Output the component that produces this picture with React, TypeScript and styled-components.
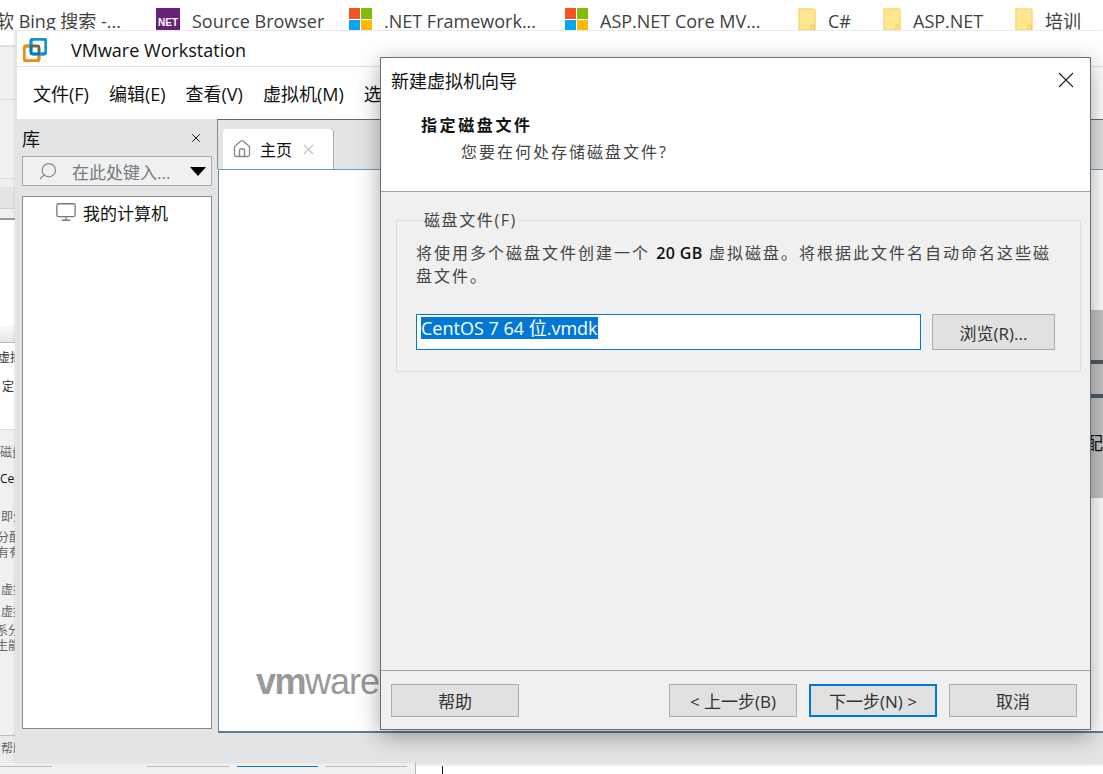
import React from "react";
import styled, { createGlobalStyle } from "styled-components";
import { House, Monitor, Search, X } from "lucide-react";

const UI_FONT = `"Open Sans", "Noto Sans", "Noto Sans CJK SC", sans-serif`;

const GlobalStyle = createGlobalStyle`
	html, body {
		margin: 0;
		padding: 0;
		background: #fff;
	}
	* {
		box-sizing: border-box;
	}
`;

const MsLogo = () => (
	<svg width="23" height="23" viewBox="0 0 23 23">
		<rect width="11" height="11" fill="#f35325" />
		<rect x="12" width="11" height="11" fill="#81bc06" />
		<rect y="12" width="11" height="11" fill="#05a6f0" />
		<rect x="12" y="12" width="11" height="11" fill="#ffba08" />
	</svg>
);

const FolderIcon = () => (
	<svg width="18" height="22" viewBox="0 0 18 22">
		<path d="M1 1h15l1 1v20H1z" fill="#ffe68f" stroke="#f8d775" strokeWidth="1.5" />
		<path d="M13 22v-5h3v5" fill="none" stroke="#f3c94f" strokeWidth="1" />
	</svg>
);

const VmLogo = () => (
	<svg width="24" height="24" viewBox="0 0 24 24">
		<rect x="1" y="8" width="15" height="15" rx="2.5" fill="none" stroke="#f08a12" strokeWidth="3.4" />
		<rect x="8" y="1" width="15" height="15" rx="2.5" fill="none" stroke="#0f95d3" strokeWidth="3.4" />
		<rect x="8" y="8" width="8" height="8" fill="none" stroke="#0f6d9c" strokeWidth="1.6" />
	</svg>
);

const ThinClose = () => (
	<svg width="16" height="16" viewBox="0 0 16 16">
		<path d="M1 1l14 14M15 1L1 15" stroke="#222" strokeWidth="1.1" fill="none" />
	</svg>
);

const menus = ["文件(F)", "编辑(E)", "查看(V)", "虚拟机(M)", "选项卡(T)"];

const stripRows = [
	{ top: 8, height: 14, text: "虚拟", light: false },
	{ top: 15, height: 14, text: "定", light: false, indent: 2 },
];

const sideRows = [
	{ top: 16, text: "磁盘", indent: 0 },
	{ top: 12, text: "Cen", indent: 0, dark: true },
	{ top: 24, text: "即分", indent: 1 },
	{ top: 7, text: "分配", indent: -3 },
	{ top: 1, text: "有有", indent: -3 },
	{ top: 23, text: "虚拟", indent: 1 },
	{ top: 8, text: "虚拟", indent: 1 },
	{ top: 5, text: "系分", indent: -4 },
	{ top: 1, text: "生能", indent: -4 },
];

export default function App() {
	const bookmarks = [
		{ key: "bing", width: 156, label: "软 Bing 搜索 -..." },
		{ key: "net", width: 193, label: "Source Browser", icon: <NetBadge>NET</NetBadge> },
		{ key: "fw", width: 216, label: ".NET Framework...", icon: <MsLogo /> },
		{ key: "core", width: 233, label: "ASP.NET Core MV...", icon: <MsLogo /> },
		{ key: "cs", width: 85, label: "C#", icon: <FolderIcon /> },
		{ key: "asp", width: 132, label: "ASP.NET", icon: <FolderIcon /> },
		{ key: "train", width: 88, label: "培训", icon: <FolderIcon /> },
	];

	return (
		<Page>
			<GlobalStyle />
			<BookmarkBar>
				{bookmarks.map((b) => (
					<Bookmark key={b.key} $width={b.width}>
						{b.icon && <BookmarkIcon>{b.icon}</BookmarkIcon>}
						<BookmarkLabel $flush={!b.icon}>{b.label}</BookmarkLabel>
					</Bookmark>
				))}
			</BookmarkBar>

			<BackWindow>
				<BackTop />
				<BackRule $mt={52} />
				<BackRule $mt={78} />
				<BackButton />
				<BackWhite>
					<BackClipped />
				</BackWhite>
				<BackTabHead />
				<BackCard>
					{stripRows.map((r) => (
						<BackText key={r.text} $mt={r.top} $indent={r.indent ?? -2}>
							{r.text}
						</BackText>
					))}
				</BackCard>
				<BackSide>
					{sideRows.map((r, i) => (
						<BackText key={i} $mt={r.top} $indent={r.indent} $dark={r.dark} $grey={!r.dark}>
							{r.text}
						</BackText>
					))}
				</BackSide>
				<BackFooter>
					<BackText $mt={6} $indent={1} $grey>
						帮助
					</BackText>
				</BackFooter>
			</BackWindow>

			<BottomStrip>
				<StripTabs>
					<StripTab $width={52} />
					<StripTab $width={82} $gap={95} />
					<StripTab $width={81} $gap={8} $active />
					<StripTab $width={81} $gap={8} />
				</StripTabs>
				<StripEdge />
				<StripCursor />
			</BottomStrip>

			<MainWindow>
				<TitleBar>
					<VmLogo />
					<AppTitle>VMware Workstation</AppTitle>
				</TitleBar>
				<MenuBar>
					{menus.map((m) => (
						<MenuItem key={m}>{m}</MenuItem>
					))}
				</MenuBar>
				<Body>
					<Library>
						<LibraryHead>
							<span>库</span>
							<X size={14} color="#111" strokeWidth={1.6} />
						</LibraryHead>
						<SearchBox>
							<SearchIcon size={20} color="#8a8a8a" strokeWidth={1.5} />
							<SearchHint>在此处键入...</SearchHint>
							<Caret />
						</SearchBox>
						<Tree>
							<TreeRow>
								<Monitor size={22} color="#777" strokeWidth={1.4} />
								<span>我的计算机</span>
							</TreeRow>
						</Tree>
					</Library>
					<Workspace>
						<TabStrip>
							<Tab>
								<House size={20} color="#888" strokeWidth={1.6} />
								<TabLabel>主页</TabLabel>
								<X size={17} color="#c4c4c4" strokeWidth={1.8} />
							</Tab>
						</TabStrip>
						<Panel>
							<BrandMark>
								<b>vm</b>ware
							</BrandMark>
							<HomeTile>
								<TileBar />
								<TileBar />
								<TileText>配</TileText>
							</HomeTile>
						</Panel>
					</Workspace>
				</Body>
			</MainWindow>

			<Dialog>
				<DialogHead>
					<DialogTitleRow>
						<DialogTitle>新建虚拟机向导</DialogTitle>
						<ThinClose />
					</DialogTitleRow>
					<WizardTitle>指定磁盘文件</WizardTitle>
					<WizardSub>您要在何处存储磁盘文件?</WizardSub>
				</DialogHead>
				<DialogBody>
					<FileGroup>
						<GroupLegend>磁盘文件(F)</GroupLegend>
						<GroupText>
							将使用多个磁盘文件创建一个 <b>20 GB</b> 虚拟磁盘。将根据此文件名自动命名这些磁盘文件。
						</GroupText>
						<FileRow>
							<FileInput>
								<Selected>CentOS 7 64 位.vmdk</Selected>
							</FileInput>
							<Button $width={123} $height={36}>
								浏览(R)...
							</Button>
						</FileRow>
					</FileGroup>
				</DialogBody>
				<DialogFoot>
					<Button>帮助</Button>
					<FootSpacer />
					<Button>&lt; 上一步(B)</Button>
					<Button $primary>下一步(N) &gt;</Button>
					<Button>取消</Button>
				</DialogFoot>
			</Dialog>
		</Page>
	);
}

const Page = styled.div`
	position: relative;
	width: 1103px;
	height: 774px;
	overflow: hidden;
	background: #fff;
	font-family: ${UI_FONT};
	color: #111;
`;

const BookmarkBar = styled.div`
	display: flex;
	height: 31px;
	overflow: hidden;
	border-bottom: 1px solid #f0f0f0;
`;

const Bookmark = styled.div<{ $width: number }>`
	display: flex;
	flex: none;
	width: ${(p) => p.$width}px;
	height: 30px;
	gap: 12px;
	padding-top: 8px;
	overflow: hidden;
	white-space: nowrap;
`;

const BookmarkIcon = styled.div`
	flex: none;
	height: 22px;
`;

const BookmarkLabel = styled.span<{ $flush: boolean }>`
	font-size: 18px;
	line-height: 26px;
	color: #3f3f3f;
	margin-left: ${(p) => (p.$flush ? "-4px" : "0")};
`;

const NetBadge = styled.div`
	display: flex;
	align-items: flex-end;
	justify-content: center;
	width: 24px;
	height: 22px;
	padding-bottom: 1px;
	background: #68217a;
	color: #fff;
	font: bold 10px/12px "Liberation Sans", sans-serif;
`;

const BackWindow = styled.div`
	position: absolute;
	left: 0;
	top: 31px;
	width: 15px;
	height: 733px;
	display: flex;
	flex-direction: column;
	background: #f0f0f0;
`;

const BackTop = styled.div`
	height: 16px;
	background: #fff;
	border-bottom: 2px solid #dedede;
`;

const BackRule = styled.div<{ $mt: number }>`
	height: 1px;
	margin-top: ${(p) => p.$mt}px;
	background: #dcdcdc;
`;

const BackButton = styled.div`
	height: 22px;
	margin-top: 8px;
	background: #e4e4e4;
	border-bottom: 1px solid #cfcfcf;
`;

const BackWhite = styled.div`
	flex: none;
	height: 107px;
	margin-top: 9px;
	background: #fff;
	border-top: 2px solid #9a9a9a;
	overflow: hidden;
`;

const BackClipped = styled.div`
	height: 2px;
	margin-top: 105px;
	background: #555;
`;

const BackTabHead = styled.div`
	height: 18px;
	background: linear-gradient(#fafafa, #e6e6e6);
	border-bottom: 1px solid #b5b5b5;
`;

const BackCard = styled.div`
	height: 87px;
	background: #fff;
	border-bottom: 1px solid #dcdcdc;
	overflow: hidden;
`;

const BackSide = styled.div`
	height: 305px;
	overflow: hidden;
`;

const BackFooter = styled.div`
	flex: 1;
	border-top: 1px solid #bdbdbd;
	overflow: hidden;
	background: #ebebeb;
`;

const BackText = styled.div<{ $mt: number; $indent: number; $dark?: boolean; $grey?: boolean }>`
	height: 14px;
	margin-top: ${(p) => p.$mt}px;
	margin-left: ${(p) => p.$indent}px;
	font-size: 12px;
	line-height: 14px;
	white-space: nowrap;
	color: ${(p) => (p.$dark ? "#111" : p.$grey ? "#666" : "#333")};
`;

const BottomStrip = styled.div`
	position: absolute;
	left: 0;
	right: 0;
	bottom: 0;
	height: 11px;
	display: flex;
	background: linear-gradient(#eeeeee 3px, #fff 3px);
`;

const StripTabs = styled.div`
	display: flex;
	align-items: flex-start;
	width: 416px;
	height: 11px;
	padding-top: 3px;
	background: #f0f0f0;
	border-right: 1px solid #b5b5b5;
`;

const StripTab = styled.div<{ $width: number; $gap?: number; $active?: boolean }>`
	flex: none;
	width: ${(p) => p.$width}px;
	height: 1px;
	margin-left: ${(p) => p.$gap ?? 0}px;
	background: ${(p) => (p.$active ? "#0078d7" : "#b8b8b8")};
`;

const StripEdge = styled.div`
	width: 26px;
`;

const StripCursor = styled.div`
	width: 1px;
	height: 8px;
	margin-top: 3px;
	background: #111;
`;

const MainWindow = styled.div`
	position: absolute;
	left: 15px;
	right: 0;
	top: 31px;
	height: 732px;
	display: flex;
	flex-direction: column;
	padding-left: 2px;
	background: #e3e4e6;
	box-shadow: -1px 0 2px rgba(0, 0, 0, 0.08);
`;

const TitleBar = styled.div`
	display: flex;
	align-items: center;
	flex: none;
	height: 36px;
	padding: 2px 0 0 6px;
	gap: 24px;
	background: #fff;
	border-bottom: 1px solid #e2e2e2;
`;

const AppTitle = styled.span`
	font-size: 18px;
	color: #111;
`;

const MenuBar = styled.div`
	display: flex;
	align-items: center;
	flex: none;
	height: 52px;
	padding-left: 16px;
	gap: 20px;
	background: #fff;
	white-space: nowrap;
	overflow: hidden;
`;

const MenuItem = styled.span`
	font-size: 18px;
	color: #111;
`;

const Body = styled.div`
	display: flex;
	flex: 1;
	min-height: 0;
`;

const Library = styled.div`
	display: flex;
	flex-direction: column;
	flex: none;
	width: 200px;
	padding-left: 5px;
	padding-right: 5px;
`;

const LibraryHead = styled.div`
	display: flex;
	align-items: center;
	justify-content: space-between;
	height: 37px;
	padding-right: 9px;
	font-size: 18px;
`;

const SearchBox = styled.div`
	display: flex;
	align-items: center;
	height: 30px;
	padding-left: 15px;
	background: #f0f0f0;
	border: 1px solid #a8a8a8;
`;

const SearchIcon = styled(Search)`
	transform: scaleX(-1);
	flex: none;
`;

const SearchHint = styled.span`
	margin-left: 14px;
	font-size: 17px;
	color: #6f7a85;
	white-space: nowrap;
`;

const Caret = styled.div`
	flex: none;
	width: 0;
	height: 0;
	margin-left: auto;
	margin-right: 5px;
	border-left: 8px solid transparent;
	border-right: 8px solid transparent;
	border-top: 9px solid #000;
`;

const Tree = styled.div`
	flex: none;
	height: 533px;
	margin-top: 10px;
	background: #fff;
	border: 1px solid #8a8a8a;
`;

const TreeRow = styled.div`
	display: flex;
	align-items: center;
	gap: 6px;
	height: 30px;
	padding-left: 32px;
	font-size: 17px;
`;

const Workspace = styled.div`
	display: flex;
	flex-direction: column;
	flex: 1;
	min-width: 0;
	height: 614px;
`;

const TabStrip = styled.div`
	display: flex;
	align-items: flex-end;
	flex: none;
	height: 50px;
	padding-left: 5px;
	margin-left: 0;
	border-top: 1px solid #666;
	border-left: 1px solid #8a8a8a;
`;

const Tab = styled.div`
	display: flex;
	align-items: center;
	width: 111px;
	height: 40px;
	padding-left: 9px;
	background: #fff;
	border-right: 1px solid #aaa;
	border-top-right-radius: 4px;
	border-top-left-radius: 4px;
`;

const TabLabel = styled.span`
	margin: 0 8px 0 8px;
	font-size: 16px;
`;

const Panel = styled.div`
	display: flex;
	flex: 1;
	margin-left: 1px;
	padding-left: 37px;
	background: #fff;
	border-top: 1px solid #6f9db5;
	border-left: 1px solid #5d8ea8;
	border-bottom: 2px solid #5d7f92;
`;

const BrandMark = styled.div`
	align-self: flex-end;
	margin-bottom: 29px;
	font: 36px/40px "Liberation Sans", sans-serif;
	letter-spacing: -1px;
	color: #999;
	white-space: nowrap;
	b {
		font-weight: 700;
		letter-spacing: -1.5px;
	}
`;

const HomeTile = styled.div`
	display: flex;
	flex-direction: column;
	align-items: flex-start;
	flex: none;
	width: 12px;
	height: 188px;
	margin: 140px 0 0 auto;
	padding-top: 50px;
	gap: 30px;
	background: #c4c4c4;
	overflow: hidden;
`;

const TileBar = styled.div`
	flex: none;
	width: 12px;
	height: 4px;
	background: #4d5a66;
`;

const TileText = styled.div`
	flex: none;
	margin: 4px 0 0 -6px;
	font-size: 18px;
	line-height: 22px;
	color: #111;
`;

const Dialog = styled.div`
	position: absolute;
	left: 380px;
	top: 57px;
	width: 711px;
	height: 673px;
	display: flex;
	flex-direction: column;
	background: #f0f0f0;
	border: 1px solid #6d6d6d;
	box-shadow: 0 6px 22px rgba(0, 0, 0, 0.35);
`;

const DialogHead = styled.div`
	flex: none;
	height: 134px;
	background: #fff;
	border-bottom: 1px solid #a0a0a0;
`;

const DialogTitleRow = styled.div`
	display: flex;
	align-items: center;
	justify-content: space-between;
	height: 44px;
	padding: 0 16px 0 10px;
`;

const DialogTitle = styled.span`
	font-size: 18px;
	color: #111;
`;

const WizardTitle = styled.div`
	margin: 11px 0 0 40px;
	font-size: 16px;
	line-height: 24px;
	font-weight: 700;
	letter-spacing: 2.6px;
	color: #111;
`;

const WizardSub = styled.div`
	margin: 3px 0 0 80px;
	font-size: 16px;
	line-height: 24px;
	letter-spacing: 2px;
	color: #444;
`;

const DialogBody = styled.div`
	flex: 1;
	padding: 18px 16px 0 15px;
`;

const FileGroup = styled.fieldset`
	height: 162px;
	margin: 0;
	padding: 0 20px 0 19px;
	border: 1px solid #dcdcdc;
`;

const GroupLegend = styled.legend`
	margin-left: 7px;
	padding: 0 1px;
	font-size: 16px;
	line-height: 20px;
	letter-spacing: 1.6px;
	color: #444;
`;

const GroupText = styled.div`
	margin-top: 12px;
	width: 644px;
	font-size: 16px;
	line-height: 23px;
	letter-spacing: 2px;
	color: #444;
	b {
		font-weight: 600;
		letter-spacing: 0.4px;
		color: #111;
	}
`;

const FileRow = styled.div`
	display: flex;
	gap: 11px;
	margin-top: 26px;
`;

const FileInput = styled.div`
	flex: none;
	width: 505px;
	height: 36px;
	padding: 2px 0 0 4px;
	background: #fff;
	border: 1px solid #0078d7;
`;

const Selected = styled.span`
	display: inline-block;
	height: 22px;
	font-size: 18px;
	line-height: 22px;
	color: #fff;
	background: #0078d7;
`;

const Button = styled.div<{ $width?: number; $height?: number; $primary?: boolean }>`
	display: flex;
	align-items: center;
	justify-content: center;
	flex: none;
	width: ${(p) => p.$width ?? 128}px;
	height: ${(p) => p.$height ?? 33}px;
	font-size: 17px;
	color: #333;
	background: #e1e1e1;
	border: ${(p) => (p.$primary ? "2px solid #0078d7" : "1px solid #adadad")};
	white-space: nowrap;
`;

const DialogFoot = styled.div`
	display: flex;
	flex: none;
	height: 59px;
	gap: 12px;
	padding: 13px 13px 0 10px;
	border-top: 1px solid #a0a0a0;
`;

const FootSpacer = styled.div`
	flex: 1;
`;
